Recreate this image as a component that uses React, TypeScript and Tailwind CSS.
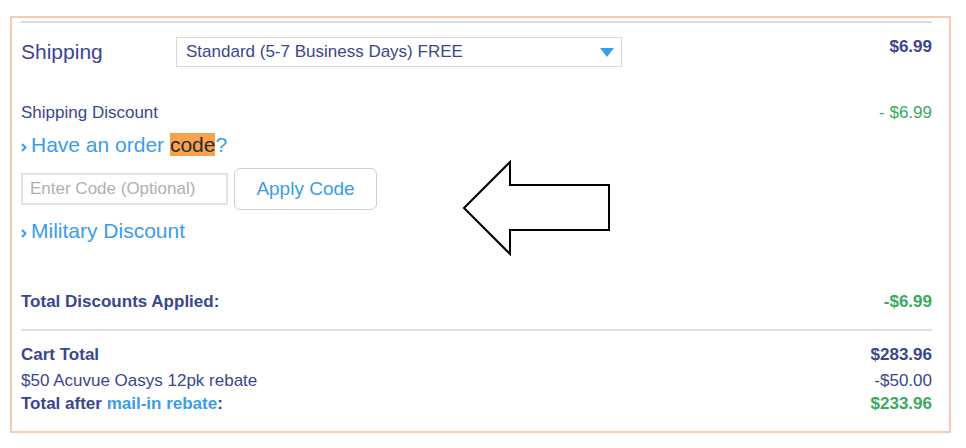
import React from 'react';

const navy = 'text-[#3b4690]';

function Chevron() {
  return (
    <svg width="6" height="9" viewBox="0 0 6 9" className="mt-[4px] mr-[4px] shrink-0">
      <path d="M1 1 L4.5 4.5 L1 8" fill="none" stroke="#3b9de8" strokeWidth="2" />
    </svg>
  );
}

export default function App() {
  return (
    <div className="min-h-screen bg-white pt-[16px] pl-[10px] font-['Liberation_Sans',Arial,sans-serif]">
      <div className="relative w-[941px] border-2 border-[#f3cdb3] pl-[9px] pr-[17px] pt-[3px] pb-[18px]">
        <div className="h-[2px] bg-[#dcdcdc]" />

        {/* shipping */}
        <div className="mt-[14px] flex h-[30px] items-start">
          <div className={`w-[155px] self-center text-[21px] leading-[24px] ${navy}`}>Shipping</div>
          <div className="flex h-[30px] w-[446px] items-center justify-between border border-[#d9d9d9] pl-[9px] pr-[7px]">
            <span className={`text-[17px] ${navy}`}>Standard (5-7 Business Days) FREE</span>
            <svg width="14" height="9" viewBox="0 0 14 9">
              <path d="M0 0 H14 L7 9 Z" fill="#3b9de8" />
            </svg>
          </div>
          <div className={`ml-auto mt-[1px] text-[17px] font-bold leading-[18px] ${navy}`}>$6.99</div>
        </div>

        <div className="mt-[37px] flex items-center justify-between text-[17px] leading-[18px]">
          <span className={navy}>Shipping Discount</span>
          <span className="text-[#3aab5e]">- $6.99</span>
        </div>

        {/* order code */}
        <div className="mt-[11px] flex items-center text-[21px] leading-[24px] text-[#3b9de8]">
          <Chevron />
          <span>
            Have an order <span className="bg-[#f7a24f] text-[#2b2b2b]">code</span>?
          </span>
        </div>

        <div className="mt-[11px] flex items-center gap-[6px]">
          <input
            placeholder="Enter Code (Optional)"
            className="h-[32px] w-[207px] border-2 border-[#e2e2e2] px-[7px] text-[17px] text-[#555] outline-none placeholder:text-[#b0b0b0]"
          />
          <button className="h-[42px] w-[143px] rounded-[6px] border border-[#cfcfcf] bg-white text-[19px] text-[#3b9de8]">
            Apply Code
          </button>
        </div>

        <div className="mt-[9px] flex items-center text-[21px] leading-[24px] text-[#3b9de8]">
          <Chevron />
          <span>Military Discount</span>
        </div>

        {/* totals */}
        <div className="mt-[50px] flex items-center justify-between text-[17px] font-bold leading-[18px]">
          <span className={navy}>Total Discounts Applied:</span>
          <span className="text-[#3aab5e]">-$6.99</span>
        </div>

        <div className="mt-[18px] h-[2px] bg-[#e0e0e0]" />

        <div className="mt-[15px] flex items-center justify-between text-[17px] font-bold leading-[18px]">
          <span className={navy}>Cart Total</span>
          <span className={navy}>$283.96</span>
        </div>
        <div className="mt-[8px] flex items-center justify-between text-[17px] leading-[18px]">
          <span className={navy}>$50 Acuvue Oasys 12pk rebate</span>
          <span className={navy}>-$50.00</span>
        </div>
        <div className="mt-[5px] flex items-center justify-between text-[17px] font-bold leading-[18px]">
          <span className={navy}>
            Total after <span className="text-[#3b9de8]">mail-in rebate</span>:
          </span>
          <span className="text-[#3aab5e]">$233.96</span>
        </div>

        {/* annotation arrow */}
        <svg
          width="150"
          height="96"
          viewBox="0 0 150 96"
          className="absolute left-[450px] top-[142px]"
        >
          <path
            d="M2 48 L48 2 L48 25 L147 25 L147 70 L48 70 L48 94 Z"
            fill="white"
            stroke="black"
            strokeWidth="2"
          />
        </svg>
      </div>
    </div>
  );
}
